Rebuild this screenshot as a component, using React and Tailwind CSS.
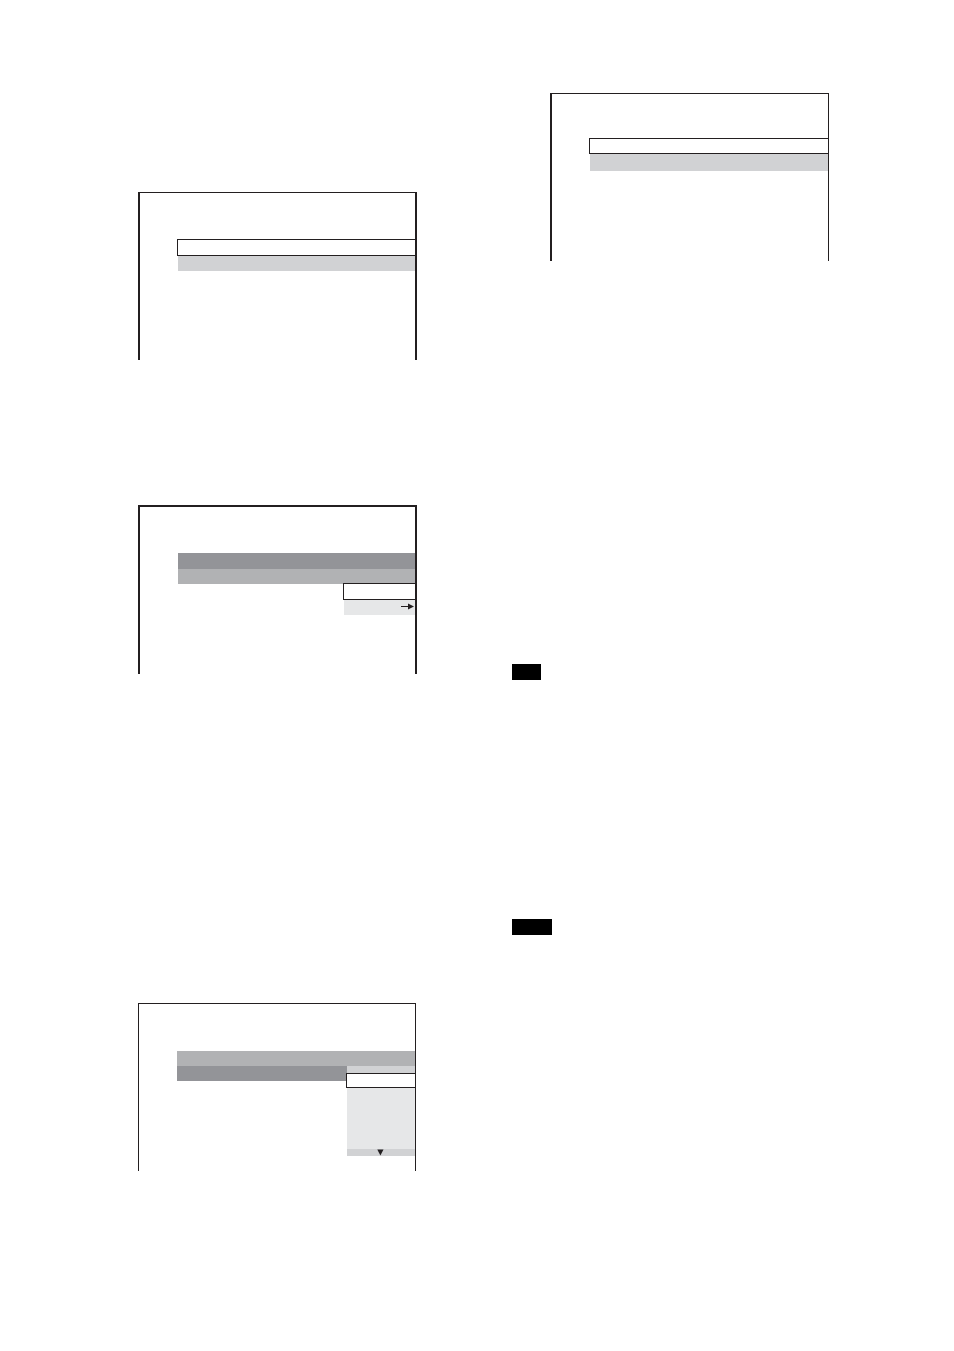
import React from 'react';

const Screen = ({ className, children }) => (
  <div className={`border-[#231f20] ${className}`}>
    {children}
  </div>
)

// Highlighted row, open on the right where it meets the screen edge
const SelectedRow = ({ className }) => (
  <div className={`border-y border-l border-[#231f20] bg-white ${className}`}></div>
)

const RightArrow = () => (
  <svg width="13" height="7" viewBox="0 0 13 7" className="block">
    <path d="M0 3.5H8" stroke="#231f20" strokeWidth="1" />
    <path d="M7 0.5L13 3.5L7 6.5Z" fill="#231f20" />
  </svg>
)

const DownArrow = () => (
  <svg width="7" height="7" viewBox="0 0 7 7" className="block">
    <path d="M0.3 0.4H6.5L3.4 6.4Z" fill="#231f20" />
  </svg>
)

const App = () => {
  return (
    <main className="grid grid-cols-[279fr_317fr] gap-x-[95px] bg-white pl-[138px] pr-[125px] pb-[180px]">
      <div className="flex flex-col">
        <Screen className="mt-[192px] h-[168px] border-x-2 border-t pt-[46px] pl-[37px]">
          <SelectedRow className="h-[17px]" />
          <div className="ml-px h-[15px] bg-[#d1d2d4]"></div>
        </Screen>

        <Screen className="mt-[145px] h-[169px] border-x-2 border-t-2 pt-[46px] pl-[38px]">
          <div className="h-4 bg-[#939498]"></div>
          <div className="h-[15px] bg-[#b1b2b4]"></div>
          <div className="relative -mt-px ml-auto w-[72px]">
            <SelectedRow className="h-[17px]" />
            <div className="ml-px flex h-[15px] items-start justify-end bg-[#e6e7e8] pt-[3px] pr-px">
              <RightArrow />
            </div>
          </div>
        </Screen>

        <Screen className="mt-[329px] mr-px h-[168px] border-x border-t pt-[47px] pl-[38px]">
          <div className="h-[15px] bg-[#b1b2b4]"></div>
          <div className="flex items-start">
            <div className="h-[15px] flex-1 bg-[#939498]"></div>
            <div className="relative -ml-px w-[69px]">
              <div className="ml-px h-[7px] bg-[#d1d2d4]"></div>
              <SelectedRow className="h-[15px]" />
              <div className="ml-px h-[61px] bg-[#e6e7e8]"></div>
              <div className="ml-px flex h-[7px] items-start justify-center bg-[#d1d2d4] pr-px">
                <DownArrow />
              </div>
            </div>
          </div>
        </Screen>
      </div>

      <div className="flex flex-col">
        <Screen className="mt-[93px] ml-[38px] h-[168px] border-t border-r border-l-2 pt-[44px] pl-[37px]">
          <SelectedRow className="h-4" />
          <div className="ml-px h-[17px] bg-[#d1d2d4]"></div>
        </Screen>
        <div className="mt-[403px] h-4 w-[29px] bg-black"></div>
        <div className="mt-[239px] h-4 w-10 bg-black"></div>
      </div>
    </main>
  )
}

export default App;
